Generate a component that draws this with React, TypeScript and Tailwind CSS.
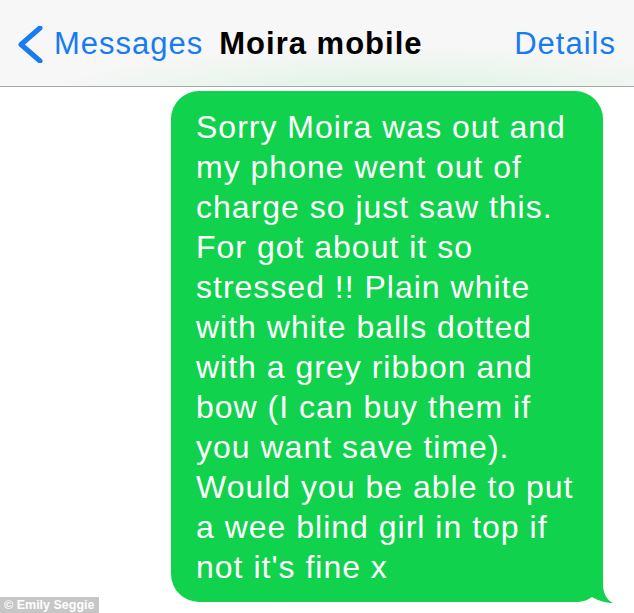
import React from "react";

const lines = [
  "Sorry Moira was out and",
  "my phone went out of",
  "charge so just saw this.",
  "For got about it so",
  "stressed !! Plain white",
  "with white balls dotted",
  "with a grey ribbon and",
  "bow (I can buy them if",
  "you want save time).",
  "Would you be able to put",
  "a wee blind girl in top if",
  "not it's fine x",
];

function Chevron() {
  return (
    <svg width="27" height="37" viewBox="0 0 27 37" fill="none">
      <polyline
        points="24,2 5,18.5 24,35"
        stroke="#177cf0"
        strokeWidth="5"
        strokeLinecap="round"
        strokeLinejoin="round"
      />
    </svg>
  );
}

export default function App() {
  return (
    <div className="relative w-[634px] h-[613px] overflow-hidden bg-white font-['Liberation_Sans',Arial,sans-serif]">
      <div className="flex items-center h-[87px] pt-[3px] pl-[16px] pr-[18px] border-b border-[#a8a8a8] bg-[radial-gradient(ellipse_55%_60%_at_62%_115%,#dcf2e2,#f6f7f6_100%)]">
        <Chevron />
        <span className="ml-[11px] text-[31px] tracking-[1px] text-[#177cf0]">Messages</span>
        <span className="ml-[16px] text-[31px] font-bold tracking-[1px] text-black">Moira mobile</span>
        <span className="ml-auto text-[31px] tracking-[1px] text-[#177cf0]">Details</span>
      </div>

      <div className="relative ml-[171px] mt-[4px] w-[432px] rounded-[28px] bg-[#10d24c] pt-[16px] pb-[15px] pl-[25px]">
        {lines.map((l) => (
          <div key={l} className="whitespace-nowrap text-[32px] leading-[40px] tracking-[1px] text-white">
            {l}
          </div>
        ))}
        <svg className="absolute right-[-10px] bottom-[-1px]" width="40" height="41" viewBox="0 0 40 41">
          <path
            d="M10 0 L30 0 L30 22 C30 32 34 38 40 41 C33 41 25 38.5 19 35 C15 38 10 40 0 40 L0 10 Z"
            fill="#10d24c"
          />
        </svg>
      </div>

      <div className="absolute left-0 bottom-0 h-[16px] whitespace-nowrap bg-[#c6c6c6] px-[4px] text-[12.5px] leading-[16px] font-bold text-white">
        © Emily Seggie
      </div>
    </div>
  );
}
